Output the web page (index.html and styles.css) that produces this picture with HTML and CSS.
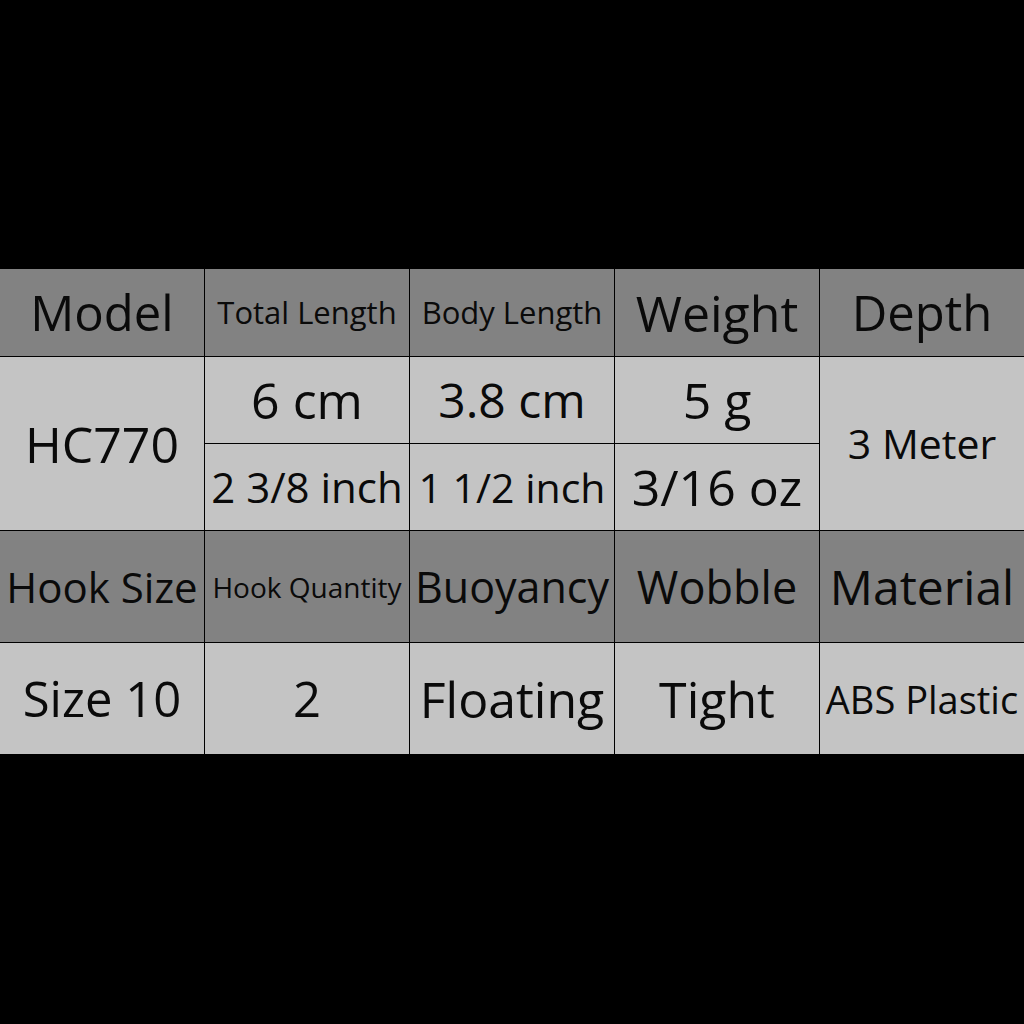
FILE: index.html
```html
<!DOCTYPE html>
<html>
<head>
<meta charset="utf-8">
<link rel="stylesheet" href="styles.css">
</head>
<body>
<div class="table">
  <div class="cell head s49">Model</div>
  <div class="cell head s31">Total Length</div>
  <div class="cell head s31">Body Length</div>
  <div class="cell head s50">Weight</div>
  <div class="cell head s49">Depth</div>

  <div class="cell body s50 span2">HC770</div>
  <div class="cell body s50">6 cm</div>
  <div class="cell body s48">3.8 cm</div>
  <div class="cell body s50">5 g</div>
  <div class="cell body s41 span2">3 Meter</div>
  <div class="cell body s42">2 3/8 inch</div>
  <div class="cell body s41">1 1/2 inch</div>
  <div class="cell body s50">3/16 oz</div>

  <div class="cell head s42">Hook Size</div>
  <div class="cell head s28">Hook Quantity</div>
  <div class="cell head s43">Buoyancy</div>
  <div class="cell head s45">Wobble</div>
  <div class="cell head s48">Material</div>

  <div class="cell body s49">Size 10</div>
  <div class="cell body s49">2</div>
  <div class="cell body s50">Floating</div>
  <div class="cell body s50">Tight</div>
  <div class="cell body s38">ABS Plastic</div>
</div>
</body>
</html>
```
FILE: styles.css
```css
html, body {
  margin: 0;
  padding: 0;
  background: #000;
}
body {
  width: 1024px;
  height: 1024px;
  padding-top: 269px;
  box-sizing: border-box;
  font-family: "Open Sans", "Noto Sans", sans-serif;
  color: #0a0a0a;
}
.table {
  display: grid;
  grid-template-columns: 204px 204px 204px 204px 204px;
  grid-template-rows: 87px 86px 86px 111px 111px;
  gap: 1px;
  background: #000;
  width: 1024px;
}
.cell {
  display: flex;
  align-items: center;
  justify-content: center;
  white-space: nowrap;
  overflow: visible;
  line-height: 1;
}
.head { background: #828282; }
.body { background: #c4c4c4; }
.span2 { grid-row: span 2; }
.s28 { font-size: 28px; }
.s31 { font-size: 31px; }
.s38 { font-size: 38px; }
.s41 { font-size: 41px; }
.s42 { font-size: 42px; }
.s43 { font-size: 43px; }
.s45 { font-size: 45px; }
.s48 { font-size: 48px; }
.s49 { font-size: 49px; }
.s50 { font-size: 50px; }
```
